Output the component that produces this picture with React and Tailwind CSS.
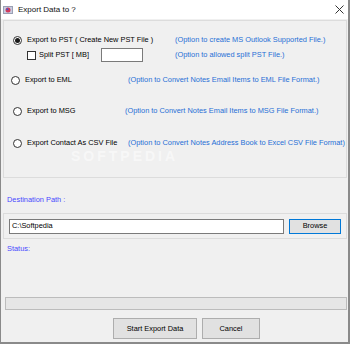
import React from 'react';

const Radio = ({ checked }) => (
  <span className="w-[9px] h-[9px] rounded-full border border-[#333] bg-white flex items-center justify-center shrink-0">
    {checked && <span className="w-[5px] h-[5px] rounded-full bg-[#1a1a1a]" />}
  </span>
);

const Option = ({ children }) => (
  <span className="text-[#1f6fd6] whitespace-nowrap">{children}</span>
);

export default function App() {
  return (
    <div
      className="relative w-[350px] h-[344px] bg-[#f0f0f0] border-l border-r-2 border-b-2 border-[#8a8a8a] flex flex-col text-[7.4px] leading-none text-black overflow-hidden"
      style={{ fontFamily: '"Liberation Sans", Arial, sans-serif' }}
    >
      {/* title bar */}
      <div className="h-[19px] bg-white flex items-center shrink-0">
        <svg width="10" height="10" viewBox="0 0 10 10" className="ml-[2px]">
          <rect x="0" y="1" width="10" height="8" fill="#9aa0b4" />
          <rect x="1" y="2" width="8" height="6" fill="#c9cde0" />
          <circle cx="5" cy="5" r="2.5" fill="#d43a5a" />
          <circle cx="4.3" cy="4.3" r="1" fill="#3a5ad4" />
        </svg>
        <span className="ml-[5px] text-[8px] text-[#111]">Export Data to ?</span>
        <svg width="9" height="9" viewBox="0 0 9 9" className="ml-auto mr-[4px]">
          <path d="M0.5 0.5 L8.5 8.5 M8.5 0.5 L0.5 8.5" stroke="#333" strokeWidth="1" />
        </svg>
      </div>

      {/* options panel */}
      <div className="ml-[2px] mr-[1px] mt-[1px] h-[158px] border border-[#dcdcdc] flex flex-col shrink-0">
        <div className="flex items-center h-[12px] mt-[13px]">
          <div className="w-[171px] flex items-center pl-[9px] gap-[5px]">
            <Radio checked />
            <span className="whitespace-nowrap">Export to PST ( Create New PST File )</span>
          </div>
          <Option>(Option to create MS Outlook Supported File.)</Option>
        </div>
        <div className="flex items-center h-[14px] mt-[2px]">
          <div className="w-[171px] flex items-center pl-[23px]">
            <span className="w-[9px] h-[9px] border border-[#333] bg-white shrink-0" />
            <span className="ml-[3px] w-[62px] whitespace-nowrap">Split PST [ MB]</span>
            <span className="w-[42px] h-[14px] bg-white border border-[#7a7a7a]" />
          </div>
          <Option>(Option to allowed split PST File.)</Option>
        </div>
        <div className="flex items-center h-[12px] mt-[12px]">
          <div className="w-[124px] flex items-center pl-[7px] gap-[5px]">
            <Radio />
            <span className="whitespace-nowrap">Export to EML</span>
          </div>
          <Option>(Option to Convert Notes Email Items to EML File Format.)</Option>
        </div>
        <div className="flex items-center h-[12px] mt-[19px]">
          <div className="w-[121px] flex items-center pl-[9px] gap-[5px]">
            <Radio />
            <span className="whitespace-nowrap">Export to MSG</span>
          </div>
          <Option>(Option to Convert Notes Email Items to MSG File Format.)</Option>
        </div>
        <div className="flex items-center h-[12px] mt-[20px]">
          <div className="w-[124px] flex items-center pl-[9px] gap-[5px]">
            <Radio />
            <span className="whitespace-nowrap">Export Contact As CSV File</span>
          </div>
          <Option>(Option to Convert Notes Address Book to Excel CSV File Format)</Option>
        </div>
      </div>

      {/* destination */}
      <div className="h-[12px] mt-[16px] pl-[6px] flex items-center text-[#4848ff] shrink-0">Destination Path :</div>
      <div className="ml-[2px] mr-[1px] mt-[7px] h-[26px] border border-[#dcdcdc] flex items-center shrink-0">
        <div className="ml-[5px] w-[275px] h-[15px] bg-white border border-[#7a7a7a] flex items-center pl-[2px]">
          C:\Softpedia
        </div>
        <button className="ml-[5px] w-[52px] h-[15px] bg-[#e1e1e1] border border-[#0078d7] flex items-center justify-center text-[7.4px] leading-none">
          Browse
        </button>
      </div>

      <div className="h-[12px] mt-[4px] pl-[6px] flex items-center text-[#4848ff] shrink-0">Status:</div>

      <div className="ml-[4px] w-[342px] h-[13px] mt-[42px] bg-[#e6e6e6] border border-[#bcbcbc] shrink-0" />

      <div className="flex mt-[8px] shrink-0">
        <button className="ml-[112px] w-[84px] h-[21px] bg-[#e1e1e1] border border-[#adadad] flex items-center justify-center text-[7.4px] leading-none">
          Start Export Data
        </button>
        <button className="ml-[5px] w-[58px] h-[21px] bg-[#e1e1e1] border border-[#adadad] flex items-center justify-center text-[7.4px] leading-none">
          Cancel
        </button>
      </div>

      {/* watermark */}
      <div className="absolute left-[70px] top-[149px] text-[14px] leading-none font-bold tracking-[3px] text-white/50 pointer-events-none">
        SOFTPEDIA
      </div>
    </div>
  );
}
